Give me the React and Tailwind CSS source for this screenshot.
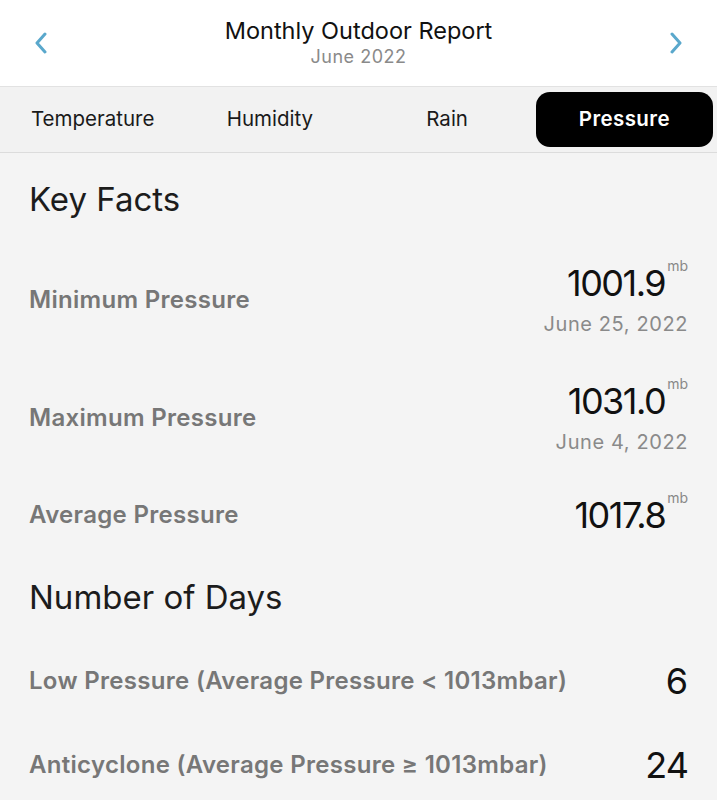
import React from 'react';

const tabs = ['Temperature', 'Humidity', 'Rain', 'Pressure'];

function Chevron({ dir }) {
  return (
    <svg width="14" height="22" viewBox="0 0 14 22" fill="none">
      <path
        d={dir === 'left' ? 'M11 2 L3 11 L11 20' : 'M3 2 L11 11 L3 20'}
        stroke="#5aa8cc"
        strokeWidth="3"
        strokeLinecap="round"
        strokeLinejoin="round"
      />
    </svg>
  );
}

function Value({ value, date }) {
  return (
    <div className="flex flex-col items-end">
      <div className="flex items-start h-[40px]">
        <span className="text-[36px] leading-[40px] text-[#111] tracking-[-1.5px]">{value}</span>
        <span className="text-[14px] leading-[14px] text-[#888] ml-[2px] -mt-[4px]">mb</span>
      </div>
      {date && (
        <span className="mt-[7px] text-[20px] leading-[28px] text-[#8a8a8a] tracking-[0.6px]">{date}</span>
      )}
    </div>
  );
}

function Row({ label, children, className }) {
  return (
    <div className={`flex items-center justify-between ${className}`}>
      <span className="text-[24px] font-semibold tracking-[0.3px] text-[#777]">{label}</span>
      {children}
    </div>
  );
}

export default function App() {
  return (
    <div className="w-[717px] h-[800px] overflow-hidden bg-[#f4f4f4]" style={{ fontFamily: 'Inter, "Noto Sans", sans-serif' }}>
      {/* Header */}
      <div className="h-[87px] bg-white flex items-center justify-between px-[34px] border-b border-[#e2e2e2]">
        <Chevron dir="left" />
        <div className="flex flex-col items-center -mt-[2px]">
          <span className="text-[23.5px] leading-[30px] text-[#111]">Monthly Outdoor Report</span>
          <span className="text-[18px] leading-[22px] text-[#8a8a8a] tracking-[0.5px]">June 2022</span>
        </div>
        <Chevron dir="right" />
      </div>

      {/* Tabs */}
      <div className="h-[66px] bg-[#f2f2f2] border-b border-[#dcdcdc] grid grid-cols-4 px-[4px] py-[5px]">
        {tabs.map(t => (
          <div
            key={t}
            className={`flex items-center justify-center rounded-[14px] text-[20.5px] ${
              t === 'Pressure' ? 'bg-black text-white font-semibold tracking-[0.4px]' : 'text-[#1a1a1a]'
            }`}
          >
            {t}
          </div>
        ))}
      </div>

      {/* Content */}
      <div className="px-[29px]">
        <h2 className="mt-[26px] h-[40px] text-[33px] leading-[40px] text-[#1c1c1c]">Key Facts</h2>

        <Row label="Minimum Pressure" className="mt-[35px] h-[92px]">
          <Value value="1001.9" date="June 25, 2022" />
        </Row>
        <Row label="Maximum Pressure" className="mt-[26px] h-[92px]">
          <Value value="1031.0" date="June 4, 2022" />
        </Row>
        <Row label="Average Pressure" className="mt-[21px] h-[60px]">
          <Value value="1017.8" />
        </Row>

        <h2 className="mt-[32px] h-[40px] text-[33px] leading-[40px] text-[#1c1c1c]">Number of Days</h2>

        <Row label="Low Pressure (Average Pressure < 1013mbar)" className="mt-[34px] h-[60px]">
          <span className="text-[36px] leading-[40px] text-[#111]">6</span>
        </Row>
        <Row label="Anticyclone (Average Pressure ≥ 1013mbar)" className="mt-[24px] h-[60px]">
          <span className="text-[36px] leading-[40px] text-[#111] tracking-[-1px]">24</span>
        </Row>
      </div>
    </div>
  );
}
